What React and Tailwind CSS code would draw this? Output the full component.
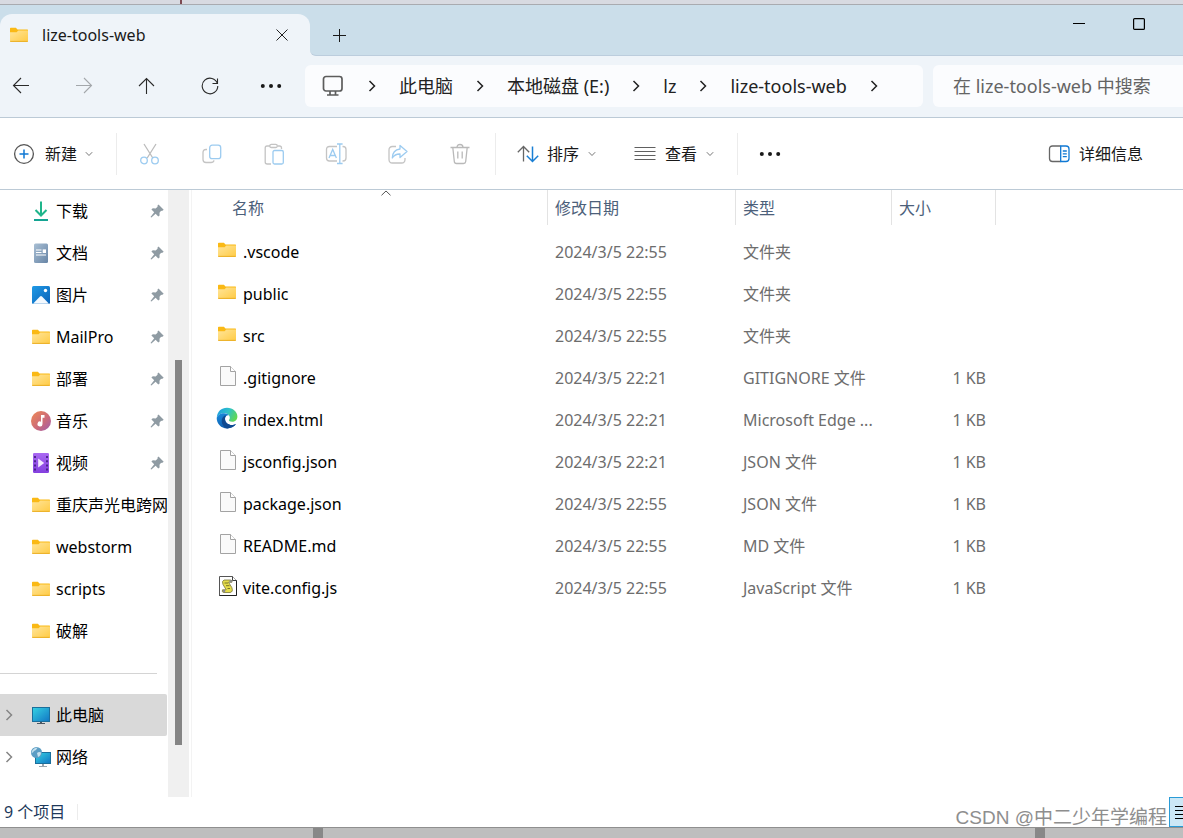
import { clsx } from "clsx";

const FolderIcon = ({ className }) => (
  <svg viewBox="0 0 22 22" className={clsx("size-[22px] shrink-0", className)} aria-hidden="true">
    <defs>
      <linearGradient id="folderFront" x1="0" y1="0" x2="1" y2="1">
        <stop offset="0" stopColor="#ffe59a" />
        <stop offset="1" stopColor="#ffcb45" />
      </linearGradient>
    </defs>
    <path d="M2 4.600q0-.8.8-.8h5.100l1.600 1.600H19.400q.6 0 .6.600v5H2z" fill="#fab915" />
    <path d="M2 8.200h6.600l1.700-1.700H20V17q0 .8-.8.8H2.800Q2 17.800 2 17z" fill="url(#folderFront)" />
    <path d="M2.200 17.400h17.600" stroke="#e9a917" strokeWidth="0.900" />
  </svg>
);

const DownloadIcon = () => (
  <svg viewBox="0 0 22 22" className="size-[22px] shrink-0" fill="none" strokeWidth="2" aria-hidden="true">
    <path d="M11 1.500v14M5.500 10l5.500 5.500 5.500-5.500" stroke="#1fb58b" />
    <path d="M4 20h14" stroke="#14a492" />
  </svg>
);

const DocumentIcon = () => (
  <svg viewBox="0 0 22 22" className="size-[22px] shrink-0" aria-hidden="true">
    <defs>
      <linearGradient id="docFill" x1="0" y1="0" x2="1" y2="1">
        <stop offset="0" stopColor="#a9bfd4" />
        <stop offset="1" stopColor="#6785a6" />
      </linearGradient>
    </defs>
    <rect x="4" y="1.500" width="14" height="19.500" rx="1.500" fill="url(#docFill)" />
    <path d="M6 8h5.500M6 10.500h5.500M6 13h10" stroke="#fff" strokeWidth="1.200" />
    <rect x="12.700" y="7.400" width="3.300" height="3.600" fill="#fff" />
  </svg>
);

const PictureIcon = () => (
  <svg viewBox="0 0 22 22" className="size-[22px] shrink-0" aria-hidden="true">
    <defs>
      <linearGradient id="picFill" x1="0" y1="0" x2="1" y2="1">
        <stop offset="0" stopColor="#1f9ae6" />
        <stop offset="1" stopColor="#0b62b8" />
      </linearGradient>
    </defs>
    <rect x="2" y="2" width="18" height="18" rx="1.500" fill="url(#picFill)" />
    <path d="M3 19.800l7-7.300q1-1 2 0l7 7.300z" fill="#f4f9fe" />
    <circle cx="15.500" cy="6.500" r="1.700" fill="#fff" />
  </svg>
);

const MusicIcon = () => (
  <svg viewBox="0 0 22 22" className="size-[22px] shrink-0" aria-hidden="true">
    <defs>
      <linearGradient id="musicFill" x1="0" y1="0" x2="1" y2="1">
        <stop offset="0" stopColor="#f08a55" />
        <stop offset="0.600" stopColor="#c9697c" />
        <stop offset="1" stopColor="#9c5bb0" />
      </linearGradient>
    </defs>
    <circle cx="11" cy="11" r="10" fill="url(#musicFill)" />
    <path d="M11 5h3.500v2.800h-2V14a2.500 2.500 0 1 1-1.500-2.300z" fill="#fff" />
  </svg>
);

const VideoIcon = () => (
  <svg viewBox="0 0 22 22" className="size-[22px] shrink-0" aria-hidden="true">
    <defs>
      <linearGradient id="videoFill" x1="0" y1="0" x2="0" y2="1">
        <stop offset="0" stopColor="#a968f2" />
        <stop offset="1" stopColor="#8440df" />
      </linearGradient>
    </defs>
    <rect x="3" y="1" width="16" height="20" rx="1.200" fill="url(#videoFill)" />
    <path d="M5 4v15M17 4v15" stroke="#3a1a78" strokeWidth="1.600" strokeDasharray="2 2.200" />
    <path d="M8.200 6.600v8.800l6-4.400z" fill="#f4eaff" />
  </svg>
);

const ComputerIcon = () => (
  <svg viewBox="0 0 22 22" className="size-[22px] shrink-0" aria-hidden="true">
    <defs>
      <linearGradient id="screenFill" x1="0" y1="0" x2="1" y2="1">
        <stop offset="0" stopColor="#36d3e3" />
        <stop offset="1" stopColor="#1176c4" />
      </linearGradient>
    </defs>
    <rect x="2.500" y="3.500" width="17" height="14" fill="url(#screenFill)" stroke="#1b6f9c" />
    <path d="M10 18h2v1h3v1H7v-1h3z" fill="#4b5661" />
  </svg>
);

const NetworkIcon = () => (
  <svg viewBox="0 0 22 22" className="size-[22px] shrink-0" aria-hidden="true">
    <rect x="5.500" y="6.500" width="15" height="11" fill="url(#screenFill)" stroke="#1b6f9c" />
    <path d="M12 18h2v2h3v1H9v-1h3z" fill="#9aa5ae" />
    <circle cx="6.500" cy="6.500" r="5.500" fill="#5b9dc4" />
    <path d="M2.500 4q3-3 5-2.200-1 2.500-3.500 3.200-1 2-2.500 2zM7 7q2-1.500 4-.5 0 3-3 4.500z" fill="#c5e0ee" />
  </svg>
);

const FileIcon = () => (
  <svg viewBox="0 0 22 22" className="mb-1 size-[22px] shrink-0" aria-hidden="true">
    <path d="M4.500 1.500h10l5 5v14h-15z" fill="#fafafa" stroke="#a3a3a3" />
    <path d="M14.500 1.500v5h5" fill="#fff" stroke="#a3a3a3" />
  </svg>
);

const EdgeIcon = () => (
  <svg viewBox="0 0 22 22" className="mb-1 size-[22px] shrink-0" aria-hidden="true">
    <defs>
      <linearGradient id="edgeTop" x1="0" y1="0.200" x2="1" y2="0.600">
        <stop offset="0" stopColor="#1b9de2" />
        <stop offset="0.500" stopColor="#2fc2c8" />
        <stop offset="1" stopColor="#63d950" />
      </linearGradient>
      <linearGradient id="edgeBody" x1="0" y1="0" x2="0.600" y2="1">
        <stop offset="0" stopColor="#1a8ee0" />
        <stop offset="1" stopColor="#0d57a6" />
      </linearGradient>
    </defs>
    <path d="M.8 10.500C1.200 4.500 5.500.8 11 .8c6 0 10.400 4.200 10.400 8.700 0 3.500-2.500 5.300-5.200 5.300-2.400 0-3.300-.9-3.300-1.500 0-.5.900-.9.900-2.500 0-2.400-2.300-4.500-5.700-4.500C4.500 6.300 1.700 8 .8 10.500z" fill="url(#edgeTop)" />
    <path d="M.7 11C1.400 8 4.500 6.300 8 6.300c2.300 0 4 .9 5 2.200-1.700-.7-4 .6-4 3.500 0 3.800 3.500 6 6.700 6 1.800 0 3-.5 3.700-.8.300-.1.500.1.300.4C17.900 20 14.800 21.400 11 21.400 5.200 21.400.6 16.800.7 11z" fill="url(#edgeBody)" />
    <path d="M8.900 8.500c-2 1-3.200 3-3.200 5.400 0 3.400 2.300 6.400 5.500 7.500 3.500 0 6.700-1.400 8.500-3.800.2-.3 0-.5-.3-.4-.7.300-1.900.8-3.700.8-3.200 0-6.700-2.200-6.700-6 0-1.500.5-2.700 1.400-3.300-.5-.3-1-.3-1.500-.2z" fill="#0f4a91" />
  </svg>
);

const ScriptIcon = () => (
  <svg viewBox="0 0 22 22" className="mb-1 size-[22px] shrink-0" aria-hidden="true">
    <path d="M3.500 1.500h13l4 4v15h-17z" fill="#fff" stroke="#555" />
    <path d="M20.500 5.500v15h-17" fill="none" stroke="#222" />
    <path d="M16.500 1.500v4h4" fill="#fff" stroke="#444" />
    <path d="M8 5h6.500q2 .2 1.500 2.200h-3.500l3.300 5.300Q17.500 17 14 17.500H7.500q-2-.5-1-2.700h3.700L7 9.500Q5.500 6 8 5z" fill="#e6dd4a" stroke="#77733a" strokeWidth="0.800" />
    <path d="M8.500 8h3.500M10 10.700h3.500M11.500 13.500h2.500" stroke="#6a6622" strokeWidth="0.900" />
    <circle cx="14.800" cy="6.200" r="1.300" fill="#8b8b8b" />
    <circle cx="8" cy="16" r="1.300" fill="#8b8b8b" />
  </svg>
);

const PinIcon = () => (
  <svg viewBox="0 0 14 14" className="size-[14px] shrink-0" aria-hidden="true">
    <path d="M8.500.5l5.200 5.200-1.700 1.200-.9-.2-1.600 2 .1 2.700-1.300 1.200-2.700-2.900-4.200 3.700-.9-.4 3.700-4.700L1.400 5.600l1.400-1.300 2.800.2 2-1.700-.2-1z" fill="#8f9ba3" />
  </svg>
);

const Chevron = ({ className }) => (
  <svg viewBox="0 0 8 12" className={clsx("h-3 w-2 shrink-0", className)} fill="none" stroke="currentColor" strokeWidth="1.500" aria-hidden="true">
    <path d="M1.500 1l5 5-5 5" />
  </svg>
);

const ChevronDown = () => (
  <svg viewBox="0 0 8 6" className="h-[6px] w-2 shrink-0" fill="none" stroke="#777" aria-hidden="true">
    <path d="M.8 1.200L4 4.500l3.200-3.300" />
  </svg>
);

const Dots = () => (
  <svg viewBox="0 0 22 6" className="h-[6px] w-[22px] shrink-0" fill="#191919" aria-hidden="true">
    <circle cx="2.800" cy="3" r="2" />
    <circle cx="11" cy="3" r="2" />
    <circle cx="19.200" cy="3" r="2" />
  </svg>
);

const NavIcon = ({ children }) => (
  <svg viewBox="0 0 18 18" className="size-[18px]" fill="none" stroke="currentColor" strokeWidth="1.100" aria-hidden="true">
    {children}
  </svg>
);

const ToolIcon = ({ children }) => (
  <svg viewBox="0 0 22 22" className="size-[22px] shrink-0" fill="none" strokeWidth="1.300" aria-hidden="true">
    {children}
  </svg>
);

const Divider = () => <div className="h-[42px] w-px shrink-0 bg-[#ececec]" />;

const quickAccess = [
  { label: "下载", icon: DownloadIcon, pinned: true },
  { label: "文档", icon: DocumentIcon, pinned: true },
  { label: "图片", icon: PictureIcon, pinned: true },
  { label: "MailPro", icon: FolderIcon, pinned: true },
  { label: "部署", icon: FolderIcon, pinned: true },
  { label: "音乐", icon: MusicIcon, pinned: true },
  { label: "视频", icon: VideoIcon, pinned: true },
  { label: "重庆声光电跨网", icon: FolderIcon },
  { label: "webstorm", icon: FolderIcon },
  { label: "scripts", icon: FolderIcon },
  { label: "破解", icon: FolderIcon },
];

const locations = [
  { label: "此电脑", icon: ComputerIcon, expandable: true, selected: true },
  { label: "网络", icon: NetworkIcon, expandable: true },
];

const RowFolderIcon = () => <FolderIcon className="mb-1" />;

const files = [
  { name: ".vscode", date: "2024/3/5 22:55", type: "文件夹", size: "", icon: RowFolderIcon },
  { name: "public", date: "2024/3/5 22:55", type: "文件夹", size: "", icon: RowFolderIcon },
  { name: "src", date: "2024/3/5 22:55", type: "文件夹", size: "", icon: RowFolderIcon },
  { name: ".gitignore", date: "2024/3/5 22:21", type: "GITIGNORE 文件", size: "1 KB", icon: FileIcon },
  { name: "index.html", date: "2024/3/5 22:21", type: "Microsoft Edge ...", size: "1 KB", icon: EdgeIcon },
  { name: "jsconfig.json", date: "2024/3/5 22:21", type: "JSON 文件", size: "1 KB", icon: FileIcon },
  { name: "package.json", date: "2024/3/5 22:55", type: "JSON 文件", size: "1 KB", icon: FileIcon },
  { name: "README.md", date: "2024/3/5 22:55", type: "MD 文件", size: "1 KB", icon: FileIcon },
  { name: "vite.config.js", date: "2024/3/5 22:55", type: "JavaScript 文件", size: "1 KB", icon: ScriptIcon },
];

const crumbs = ["此电脑", "本地磁盘 (E:)", "lz", "lize-tools-web"];

const TitleBar = () => (
  <header className="flex h-[51px] bg-[#eff4f9]">
    <div className="w-[310px] shrink-0 bg-[#cbdeea] pt-[9px]">
      <div className="flex h-[42px] items-center rounded-t-xl bg-[#eff4f9] pr-[20px] pl-2">
        <FolderIcon />
        <span className="ml-3 flex-1 truncate text-[#191919]">lize-tools-web</span>
        <button type="button" aria-label="关闭" className="flex size-4 items-center justify-center">
          <svg viewBox="0 0 14 14" className="size-[14px]" fill="none" stroke="#222" aria-hidden="true">
            <path d="M1.500 1.500l11 11M12.500 1.500l-11 11" />
          </svg>
        </button>
      </div>
    </div>
    <div className="flex flex-1 justify-between rounded-bl-md border-b border-[#bccddd] bg-[#cbdeea]">
      <button type="button" aria-label="新建标签页" className="ml-[22px] flex h-full w-[14px] items-center justify-center pt-[10px]">
        <svg viewBox="0 0 14 14" className="size-[14px] shrink-0" fill="none" stroke="#191919" aria-hidden="true">
          <path d="M7.500 1v13M1 7.500h13" />
        </svg>
      </button>
      <div className="flex h-9 items-center pt-[2px] pr-[14px]">
        <button type="button" aria-label="最小化" className="flex w-[60px] items-center justify-center">
          <svg viewBox="0 0 12 12" className="size-3" stroke="#000" aria-hidden="true">
            <path d="M0 5.500h12" />
          </svg>
        </button>
        <button type="button" aria-label="最大化" className="flex w-[60px] items-center justify-center">
          <svg viewBox="0 0 12 12" className="size-3" fill="none" stroke="#000" strokeWidth="1.200" aria-hidden="true">
            <rect x="0.600" y="0.600" width="10.800" height="10.800" rx="1" />
          </svg>
        </button>
      </div>
    </div>
  </header>
);

const AddressRow = () => (
  <div className="flex items-center border-b border-[#bccad6] bg-[#eff4f9] pt-[9px] pb-[10px]">
    <nav className="flex shrink-0 gap-[21px] text-[#2a2a2a]">
      <button type="button" aria-label="后退" className="flex h-[42px] w-[42px] items-center justify-center">
        <NavIcon><path d="M17 8.500H1.500M9 1L1.500 8.500 9 16" /></NavIcon>
      </button>
      <button type="button" aria-label="前进" className="flex h-[42px] w-[42px] items-center justify-center text-[#a3a7ab]">
        <NavIcon><path d="M1 8.500h15.500M9 1l7.500 7.500L9 16" /></NavIcon>
      </button>
      <button type="button" aria-label="上移" className="flex h-[42px] w-[42px] items-center justify-center">
        <NavIcon><path d="M8.500 17V1.500M1 9l7.500-7.500L16 9" /></NavIcon>
      </button>
      <button type="button" aria-label="刷新" className="flex h-[42px] w-[42px] items-center justify-center">
        <NavIcon><path d="M16.400 6.500A7.800 7.800 0 1 0 16.800 9M16.500 1.500v5h-5" /></NavIcon>
      </button>
      <button type="button" aria-label="更多位置" className="flex h-[42px] w-[38px] items-center justify-center">
        <Dots />
      </button>
    </nav>
    <div className="ml-[15px] flex h-[42px] min-w-0 flex-1 items-center gap-[23px] overflow-hidden rounded-md bg-[#fbfcfe] pl-4 text-lg text-[#222]">
      <svg viewBox="0 0 24 24" className="size-6 shrink-0" fill="none" stroke="#5c5c5c" strokeWidth="1.700" aria-hidden="true">
        <rect x="2.500" y="2.500" width="18.500" height="14.500" rx="2.500" />
        <path d="M9 17v3.500M14.500 17v3.500M6 21h11.500" />
      </svg>
      <Chevron />
      {crumbs.map((crumb) => (
        <div key={crumb} className="flex items-center gap-[23px] whitespace-nowrap">
          <a href="#">{crumb}</a>
          <Chevron />
        </div>
      ))}
    </div>
    <input
      type="search"
      aria-label="搜索"
      placeholder="在 lize-tools-web 中搜索"
      className="ml-[10px] h-[42px] w-[250px] shrink-0 rounded-l-md bg-[#fbfcfe] pl-5 text-lg text-[#222] outline-none placeholder:text-[#646464]"
    />
  </div>
);

const Toolbar = () => (
  <div className="flex h-[72px] items-center border-b border-[#bccad6] bg-white text-[#191919]">
    <button type="button" className="flex w-[116px] items-center pl-[13px]">
      <ToolIcon>
        <circle cx="11" cy="11" r="9.400" stroke="#555" />
        <path d="M11 6.500v9M6.500 11h9" stroke="#0f78d4" strokeWidth="1.500" />
      </ToolIcon>
      <span className="mr-2 ml-[10px]">新建</span>
      <ChevronDown />
    </button>
    <Divider />
    <div className="flex gap-10 pr-6 pl-[22px]">
      <button type="button" aria-label="剪切">
        <ToolIcon>
          <path d="M5 1l8.800 14M17 1L8.200 15" stroke="#bcbcbc" />
          <circle cx="5" cy="17.500" r="3.300" stroke="#9ccbf0" />
          <circle cx="16" cy="17.500" r="3.300" stroke="#9ccbf0" />
        </ToolIcon>
      </button>
      <button type="button" aria-label="复制">
        <ToolIcon>
          <path d="M6 6.500H5Q2 6.500 2 9.500v7Q2 19.500 5 19.500h5q2.500 0 3-2.200" stroke="#c4c4c4" />
          <rect x="8.700" y="2.200" width="11" height="13.500" rx="2.500" stroke="#9ccbf0" />
        </ToolIcon>
      </button>
      <button type="button" aria-label="粘贴">
        <ToolIcon>
          <path d="M7 3H4Q2.200 3 2.200 5v14q0 2 2 2H8M14.500 3h2q2 0 2 2v1" stroke="#c4c4c4" />
          <rect x="6.800" y="1.300" width="7.500" height="3.200" rx="1.600" stroke="#c4c4c4" />
          <rect x="10" y="7.500" width="10.300" height="13.500" rx="1.500" stroke="#9ccbf0" />
        </ToolIcon>
      </button>
      <button type="button" aria-label="重命名">
        <ToolIcon>
          <path d="M12 3.500H4.500q-3 0-3 3v8.500q0 3 3 3H12M17.500 3.500h.5q3 0 3 3v8.500q0 3-3 3h-.5" stroke="#c4c4c4" />
          <path d="M4 15L7.700 6.500l3.700 8.500M5.200 12.500h5M14.800 1.500v18.500M12 1h5.600M12 20.500h5.600" stroke="#9ccbf0" />
        </ToolIcon>
      </button>
      <button type="button" aria-label="共享">
        <ToolIcon>
          <path d="M9 3.500H5.500q-3.500 0-3.500 3.500v9.500Q2 20 5.500 20h9q3.500 0 3.500-3.500V15" stroke="#c4c4c4" />
          <path d="M13 2.500l7 6-7 6V11Q8 10.800 5.300 15 5.500 7 13 6z" stroke="#9ccbf0" strokeLinejoin="round" />
        </ToolIcon>
      </button>
      <button type="button" aria-label="删除">
        <ToolIcon>
          <path d="M1.500 4.500h19M8 4.500Q8 1.500 11 1.500t3 3M3.800 4.500l1.500 14q.2 2 2.200 2h7q2 0 2.200-2l1.500-14M8.800 8.500v7M13.200 8.500v7" stroke="#b9b9b9" />
        </ToolIcon>
      </button>
    </div>
    <Divider />
    <button type="button" className="flex items-center pl-[21px]">
      <ToolIcon>
        <path d="M6.500 18.500v-15M.8 9.200l5.700-5.700 5.700 5.700" stroke="#666" strokeWidth="1.300" />
        <path d="M15.500 3.500v15M9.800 12.800l5.700 5.700 5.700-5.700" stroke="#1a7fd4" strokeWidth="1.500" />
      </ToolIcon>
      <span className="mr-[9px] ml-2">排序</span>
      <ChevronDown />
    </button>
    <button type="button" className="ml-[38px] flex items-center">
      <svg viewBox="0 0 22 22" className="size-[22px] shrink-0" stroke="#606060" aria-hidden="true">
        <path d="M.5 4.500h21M.5 8.500h21M.5 12.500h21M.5 16.500h21" />
      </svg>
      <span className="mr-[9px] ml-[9px]">查看</span>
      <ChevronDown />
    </button>
    <div className="ml-[23px]">
      <Divider />
    </div>
    <button type="button" aria-label="查看更多" className="flex h-[42px] items-center pl-[21px]">
      <Dots />
    </button>
    <button type="button" className="mr-10 ml-auto flex items-center gap-[9px]">
      <ToolIcon>
        <path d="M12.500 3H4.500Q1.500 3 1.500 6v9.500q0 3 3 3h8" stroke="#666" strokeWidth="1.300" />
        <path d="M12.700 3h5.300q3 0 3 3v9.500q0 3-3 3h-5.300z" stroke="#0f78d4" strokeWidth="1.300" />
        <path d="M14.800 8h4M14.800 10.800h4M14.800 13.600h4" stroke="#0f78d4" />
      </ToolIcon>
      详细信息
    </button>
  </div>
);

const SidebarItem = ({ item }) => {
  const Icon = item.icon;
  return (
    <button
      type="button"
      className={clsx(
        "flex h-[42px] w-full items-center overflow-hidden text-left whitespace-nowrap text-black",
        item.selected && "rounded-r-xs bg-[#d9d9d9]"
      )}
    >
      <span className="flex w-[30px] shrink-0 pl-[5px] text-[#858585]">{item.expandable && <Chevron />}</span>
      <Icon />
      <span className="ml-1 flex-1">{item.label}</span>
      {item.pinned && <span className="pr-1"><PinIcon /></span>}
    </button>
  );
};

const Sidebar = () => (
  <aside className="flex shrink-0 border-r border-[#f3f3f3]">
    <div className="w-[168px]">
      {quickAccess.map((item) => (
        <SidebarItem key={item.label} item={item} />
      ))}
      <hr className="mt-[21px] mr-[11px] mb-5 border-[#d4d4d4]" />
      <div className="pr-px">
        {locations.map((item) => (
          <SidebarItem key={item.label} item={item} />
        ))}
      </div>
    </div>
    <div className="mr-[2px] flex w-[21px] flex-col items-center bg-[#f0f0f0]">
      <div className="flex-[170]" />
      <div className="w-[7px] flex-[385] bg-[#858585]" />
      <div className="flex-[52]" />
    </div>
  </aside>
);

const HeaderCell = ({ children }) => (
  <th className="p-0 pb-[6px] text-left font-normal">
    <button type="button" className="flex h-[35px] w-full items-center border-l border-[#e3e3e3] pl-[7px]">
      {children}
    </button>
  </th>
);

const FileTable = () => (
  <main className="min-w-0 flex-1 overflow-hidden">
    <table className="w-full table-fixed border-collapse">
      <colgroup>
        <col className="w-[355px]" />
        <col className="w-[188px]" />
        <col className="w-[156px]" />
        <col className="w-[104px]" />
        <col />
      </colgroup>
      <thead className="text-[#4c607a]">
        <tr>
          <th className="p-0 pb-[6px] pl-[33px] text-left font-normal">
            <button type="button" className="relative flex h-[35px] w-full items-center pl-[7px]">
              名称
              <svg viewBox="0 0 10 6" className="absolute top-0 left-1/2 h-[6px] w-[10px] -translate-x-1/2" fill="none" stroke="#555" aria-hidden="true">
                <path d="M.5 5.300L5 1l4.500 4.300" />
              </svg>
            </button>
          </th>
          <HeaderCell>修改日期</HeaderCell>
          <HeaderCell>类型</HeaderCell>
          <HeaderCell>大小</HeaderCell>
          <th className="p-0 pb-[6px]">
            <div className="h-[35px] border-l border-[#e3e3e3]" />
          </th>
        </tr>
      </thead>
      <tbody className="text-[#6d6d6d]">
        {files.map((file) => {
          const Icon = file.icon;
          return (
            <tr key={file.name} className="h-[42px]">
              <td className="p-0 pl-6 text-black">
                <div className="flex items-center gap-[5px]">
                  <Icon />
                  {file.name}
                </div>
              </td>
              <td className="p-0 pl-2">{file.date}</td>
              <td className="p-0 pl-2 whitespace-nowrap">{file.type}</td>
              <td className="p-0 pr-[9px] text-right">{file.size}</td>
              <td className="p-0" />
            </tr>
          );
        })}
      </tbody>
    </table>
  </main>
);

const StatusBar = () => (
  <footer className="relative flex h-[30px] items-center justify-between pl-1">
    <div className="flex items-center gap-3 text-[#1e395b]">
      9 个项目
      <div className="h-4 w-px bg-[#ececec]" />
    </div>
    <button type="button" aria-label="详细列表" className="flex h-[30px] w-[14px] items-center overflow-hidden border border-r-0 border-[#2a9bd6] bg-[#cce8f6] pl-1">
      <svg viewBox="0 0 16 16" className="size-4 shrink-0" stroke="#000" aria-hidden="true">
        <path d="M1 2.500h15M1 6.500h15M1 10.500h15M1 14.500h15" />
      </svg>
    </button>
    <p className="absolute right-4 bottom-[-5px] font-['Liberation_Sans','Noto_Sans_CJK_SC',sans-serif] text-[19px] text-[#8e8e8e]">
      CSDN @中二少年学编程
    </p>
  </footer>
);

export default function App() {
  return (
    <div className="flex min-h-screen flex-col overflow-hidden bg-white font-['Noto_Sans','Noto_Sans_CJK_SC',sans-serif] text-base">
      <div className="flex h-[5px] border-b border-[#a9abb0] bg-[#d8dae1]">
        <div className="ml-[180px] w-[2px] bg-[#7d4a52]" />
      </div>
      <TitleBar />
      <AddressRow />
      <Toolbar />
      <div className="flex flex-1">
        <Sidebar />
        <FileTable />
      </div>
      <StatusBar />
      <div className="flex h-[11px] justify-between border-t border-[#8f8f8f] bg-[#bebebe] pr-[138px] pl-[313px]">
        <div className="w-[10px] bg-[#888]" />
        <div className="w-[10px] bg-[#888]" />
      </div>
    </div>
  );
}
